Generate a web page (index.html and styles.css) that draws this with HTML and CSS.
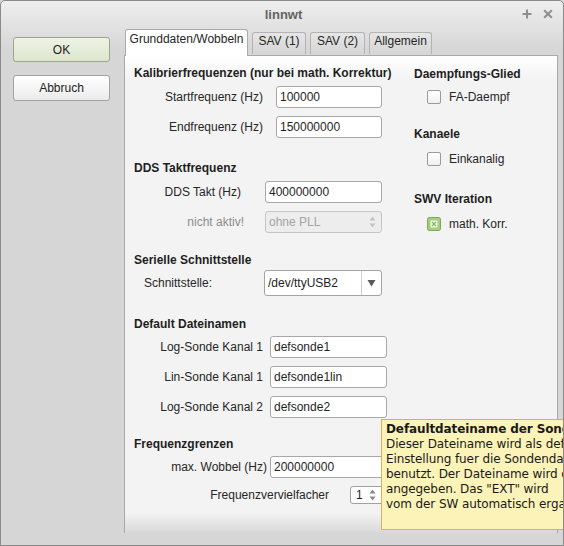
FILE: index.html
```html
<!DOCTYPE html>
<html>
<head>
<meta charset="utf-8">
<title>linnwt</title>
<link rel="stylesheet" href="styles.css">
</head>
<body>
<div class="window">
  <div class="titlebar">
    <span class="title">linnwt</span>
    <div class="wbtns">
      <svg class="wbtn" width="10" height="10" viewBox="0 0 10 10"><path d="M5 0.5v9M0.5 5h9" stroke="#8e8e8e" stroke-width="2"/></svg>
      <svg class="wbtn" width="10" height="10" viewBox="0 0 10 10"><path d="M1.2 1.2l7.6 7.6M8.8 1.2l-7.6 7.6" stroke="#8e8e8e" stroke-width="2"/></svg>
    </div>
  </div>
  <div class="main">
    <div class="side">
      <div class="btn btn-ok">OK</div>
      <div class="btn btn-cancel">Abbruch</div>
    </div>
    <div class="tabwidget">
      <div class="tabbar">
        <div class="tab active t1">Grunddaten/Wobbeln</div>
        <div class="tab t2">SAV (1)</div>
        <div class="tab t3">SAV (2)</div>
        <div class="tab t4">Allgemein</div>
      </div>
      <div class="panel">
        <div class="col-left">
          <div class="sec s1">
            <div class="heading">Kalibrierfrequenzen (nur bei math. Korrektur)</div>
            <div class="row"><span class="lbl">Startfrequenz (Hz)</span><span class="field">100000</span></div>
            <div class="row"><span class="lbl">Endfrequenz (Hz)</span><span class="field">150000000</span></div>
          </div>
          <div class="sec s2">
            <div class="heading">DDS Taktfrequenz</div>
            <div class="row"><span class="lbl lbl-dds">DDS Takt (Hz)</span><span class="field">400000000</span></div>
            <div class="row"><span class="lbl lbl-na">nicht aktiv!</span><span class="field combo-dis">ohne PLL<svg class="spin-arrows" width="7" height="14" viewBox="0 0 7 14"><path d="M0.5 5.5L3.5 1.5L6.5 5.5Z M0.5 8.5L3.5 12.5L6.5 8.5Z" fill="#c4c4c4"/></svg></span></div>
          </div>
          <div class="sec s3">
            <div class="heading">Serielle Schnittstelle</div>
            <div class="row row-combo"><span class="lbl">Schnittstelle:</span><span class="field combo"><span class="combo-text">/dev/ttyUSB2</span><span class="combo-btn"><svg width="9" height="8" viewBox="0 0 9 8"><path d="M0.5 1L8.5 1L4.5 7.5Z" fill="#5a5a5a"/></svg></span></span></div>
          </div>
          <div class="sec s4">
            <div class="heading">Default Dateinamen</div>
            <div class="row"><span class="lbl">Log-Sonde Kanal 1</span><span class="field">defsonde1</span></div>
            <div class="row"><span class="lbl">Lin-Sonde Kanal 1</span><span class="field">defsonde1lin</span></div>
            <div class="row"><span class="lbl">Log-Sonde Kanal 2</span><span class="field">defsonde2</span></div>
          </div>
          <div class="sec s5">
            <div class="heading">Frequenzgrenzen</div>
            <div class="row"><span class="lbl">max. Wobbel (Hz)</span><span class="field">200000000</span></div>
            <div class="row row-spin"><span class="lbl lbl-fv">Frequenzvervielfacher</span><span class="field spin">1<svg class="spin-arrows" width="7" height="14" viewBox="0 0 7 14"><path d="M0.5 5.5L3.5 1.5L6.5 5.5Z M0.5 8.5L3.5 12.5L6.5 8.5Z" fill="#8a8a8a"/></svg></span></div>
          </div>
        </div>
        <div class="col-right">
          <div class="heading">Daempfungs-Glied</div>
          <div class="check c1"><span class="box"></span><span>FA-Daempf</span></div>
          <div class="heading h2r">Kanaele</div>
          <div class="check"><span class="box"></span><span>Einkanalig</span></div>
          <div class="heading h3r">SWV Iteration</div>
          <div class="check"><svg class="box-on" width="14" height="14" viewBox="0 0 14 14"><rect x="0.5" y="0.5" width="13" height="13" rx="2" fill="#a5cf7e" stroke="#7ea35a"/><rect x="3.5" y="3.5" width="7" height="7" rx="1" fill="#f4f8ee"/><path d="M5 5l4 4M9 5l-4 4" stroke="#8dbb63" stroke-width="1.3"/></svg><span>math. Korr.</span></div>
        </div>
      </div>
    </div>
  </div>
  <div class="tooltip">
    <div class="tt-title">Defaultdateiname der Sonde</div>
    <div>Dieser Dateiname wird als default</div>
    <div>Einstellung fuer die Sondendatei</div>
    <div>benutzt. Der Dateiname wird ohne</div>
    <div>angegeben. Das "EXT" wird</div>
    <div>vom der SW automatisch ergaenzt.</div>
  </div>
</div>
</body>
</html>
```

FILE: styles.css
```css
html, body {
  margin: 0;
  padding: 0;
  background: #d6d6d6;
}

.window {
  position: relative;
  width: 564px;
  height: 546px;
  box-sizing: border-box;
  border: 1px solid #8a8a8a;
  border-radius: 5px 5px 0 0;
  background: linear-gradient(#eeeeee 0, #d6d6d6 48px, #d6d6d6 100%);
  overflow: hidden;
  font-family: "Liberation Sans", Arial, sans-serif;
  font-size: 12px;
  color: #262626;
}

.titlebar {
  height: 26px;
  display: flex;
  align-items: center;
  justify-content: center;
  position: relative;
}

.title {
  font-weight: bold;
  font-size: 13px;
  color: #636363;
  margin-left: 3px;
}

.wbtns {
  position: absolute;
  right: 10px;
  top: 8px;
  display: flex;
  gap: 11px;
}

.wbtn {
  display: block;
}

.main {
  display: flex;
}

.side {
  width: 123px;
  box-sizing: border-box;
  padding: 10px 0 0 12px;
  display: flex;
  flex-direction: column;
  gap: 13px;
}

.btn {
  width: 97px;
  height: 25px;
  box-sizing: border-box;
  border: 1px solid #a2a2a2;
  border-radius: 3px;
  display: flex;
  align-items: center;
  justify-content: center;
  color: #222;
}

.btn-ok {
  background: linear-gradient(#eef3e6, #dce6cc);
  border-color: #9aa58e;
}

.btn-cancel {
  background: linear-gradient(#ffffff, #ebebeb);
  height: 26px;
}

.tabwidget {
  width: 434px;
  display: flex;
  flex-direction: column;
}

.tabbar {
  height: 28px;
  display: flex;
  align-items: flex-end;
  padding-left: 1px;
  gap: 4px;
}

.tab {
  box-sizing: border-box;
  height: 22px;
  margin-bottom: 1px;
  border: 1px solid #b3b3b3;
  border-bottom: none;
  border-radius: 3px 3px 0 0;
  background: linear-gradient(#e6e6e6, #d5d5d5);
  display: flex;
  align-items: center;
  justify-content: center;
  padding-bottom: 5px;
  color: #262626;
}

.tab.active {
  position: relative;
  z-index: 1;
  height: 27px;
  margin-bottom: -1px;
  background: #ffffff;
  border-color: #ababab;
  padding-bottom: 9px;
}

.t1 { width: 123px; }
.t2 { width: 54px; }
.t3 { width: 55px; }
.t4 { width: 63px; }

.panel {
  height: 478px;
  box-sizing: border-box;
  border: 1px solid #a9a9a9;
  border-bottom: none;
  background: linear-gradient(#ffffff 0, #f3f3f3 24px, #f3f3f3 calc(100% - 20px), #d8d8d8 100%);
  display: flex;
  padding: 10px 0 0 9px;
}

.col-left {
  width: 280px;
}

.heading {
  font-weight: bold;
  height: 14px;
  line-height: 14px;
  white-space: nowrap;
  color: #1e1e1e;
}

.row {
  display: flex;
  align-items: center;
  height: 22px;
  margin-top: 8px;
  white-space: nowrap;
}

.heading + .row {
  margin-top: 6px;
}

.lbl {
  box-sizing: border-box;
  text-align: right;
}

.field {
  position: relative;
  box-sizing: border-box;
  height: 22px;
  border: 1px solid #a8a8a8;
  border-radius: 3px;
  background: #ffffff;
  padding-left: 3px;
  line-height: 20px;
  color: #1e1e1e;
}

/* Section 1 */
.s1 .lbl { width: 142px; padding-right: 13px; }
.s1 .field { width: 106px; }

/* Section 2 */
.s2 { margin-top: 23px; }
.s2 .lbl { width: 131px; }
.s2 .lbl-dds { padding-right: 24px; }
.s2 .lbl-na { padding-right: 21px; color: #8c8c8c; }
.s2 .field { width: 117px; }

.combo-dis {
  background: #ededed;
  border-color: #c6c6c6;
  color: #a3a3a3;
}

.spin-arrows {
  position: absolute;
  right: 5px;
  top: 3px;
}

/* Section 3 */
.s3 { margin-top: 20px; }
.s3 .row-combo { height: 26px; margin-top: 3px; }
.s3 .lbl { width: 130px; text-align: left; padding-left: 10px; }
.combo {
  width: 118px;
  height: 26px;
  display: flex;
  padding-left: 0;
  line-height: 24px;
  border-color: #a3a3a3;
}
.combo-text {
  width: 93px;
  padding-left: 3px;
  border-right: 1px solid #cfcfcf;
}
.combo-btn {
  flex: 1;
  display: flex;
  align-items: center;
  justify-content: center;
}
.combo-btn svg { display: block; }

/* Section 4 */
.s4 { margin-top: 21px; }
.s4 .heading + .row { margin-top: 5px; }
.s4 .lbl { width: 136px; padding-right: 7px; }
.s4 .field { width: 117px; }

/* Section 5 */
.s5 { margin-top: 19px; }
.s5 .heading + .row { margin-top: 5px; }
.s5 .lbl { width: 136px; padding-right: 3px; }
.s5 .field { width: 117px; }
.s5 .row-spin { height: 18px; margin-top: 8px; }
.s5 .lbl-fv { width: 216px; padding-right: 21px; }
.s5 .spin {
  width: 40px;
  height: 18px;
  line-height: 16px;
  padding-left: 5px;
  border-color: #a0a0a0;
}
.s5 .spin .spin-arrows {
  right: auto;
  left: 18px;
  top: 1px;
}

/* Right column */
.col-right {
  padding-top: 1px;
}

.check {
  display: flex;
  align-items: center;
  height: 14px;
  margin-top: 11px;
  margin-left: 13px;
  gap: 8px;
  white-space: nowrap;
}

.check.c1 { margin-top: 9px; }

.box {
  width: 14px;
  height: 14px;
  box-sizing: border-box;
  border: 1px solid #9a9a9a;
  border-radius: 2px;
  background: linear-gradient(#ffffff, #f0f0f0);
}

.box-on { display: block; }

.h2r { margin-top: 23px; }
.h3r { margin-top: 26px; }

/* Tooltip */
.tooltip {
  position: absolute;
  left: 380px;
  top: 418px;
  width: 260px;
  height: 111px;
  box-sizing: border-box;
  border: 1px solid #cfb458;
  background: #fcf3b8;
  padding: 2px 0 0 4px;
  font-family: "DejaVu Sans", sans-serif;
  font-size: 12px;
  line-height: 15px;
  letter-spacing: -0.1px;
  color: #1a1a1a;
  white-space: nowrap;
}

.tt-title {
  font-weight: bold;
}
```
